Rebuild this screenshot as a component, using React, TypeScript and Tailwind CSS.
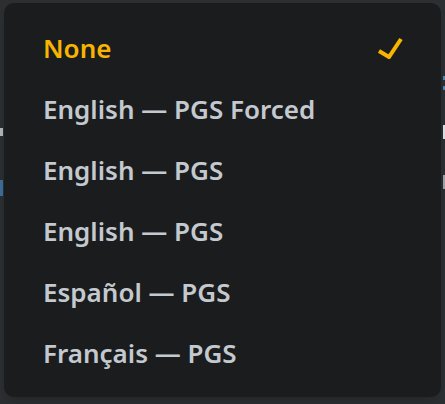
const options = [
  { id: "none", label: "None" },
  { id: "en-forced", label: "English — PGS Forced" },
  { id: "en-1", label: "English — PGS" },
  { id: "en-2", label: "English — PGS" },
  { id: "es", label: "Español — PGS" },
  { id: "fr", label: "Français — PGS" },
];

function Check() {
  return (
    <svg width="26" height="22" viewBox="0 0 26 22" fill="none">
      <path
        d="M2 14 L12 20 L24 2"
        stroke="#f7b500"
        strokeWidth="4"
        strokeLinecap="butt"
        strokeLinejoin="miter"
      />
    </svg>
  );
}

export default function App() {
  const selected = "none";

  return (
    <div
      className="flex w-[445px] h-[404px] bg-[#2b2f31] overflow-hidden"
      style={{ fontFamily: '"Noto Sans", "Open Sans", sans-serif' }}
    >
      {/* page behind the menu, left edge */}
      <div className="flex w-[4px] flex-col">
        <span className="mt-[128px] h-[8px] w-[3px] bg-[#aeb4b8]" />
        <span className="mt-[44px] h-[16px] w-[3px] bg-[#3d6d96]" />
      </div>

      <div className="mt-[3px] h-[394px] w-[437px] rounded-[10px] bg-[#1b1c1e] py-[14px] shadow-lg">
        <ul>
          {options.map((opt) => {
            const active = opt.id === selected;
            return (
              <li
                key={opt.id}
                className="flex h-[61px] items-center justify-between pl-[39px] pr-[38px]"
              >
                <span
                  className={
                    "text-[26px] font-semibold leading-none " +
                    (active ? "text-[#f7b500]" : "text-[#c3c9ce]")
                  }
                >
                  {opt.label}
                </span>
                {active && <Check />}
              </li>
            );
          })}
        </ul>
      </div>

      {/* page behind the menu, right edge */}
      <div className="flex w-[4px] flex-col items-end">
        <span className="mt-[76px] h-[4px] w-[2px] bg-[#4f86b0]" />
        <span className="mt-[6px] h-[4px] w-[2px] bg-[#4f86b0]" />
        <span className="mt-[35px] h-[14px] w-[2px] bg-[#d8dde0]" />
        <span className="mt-[36px] h-[14px] w-[2px] bg-[#9aa0a4]" />
      </div>
    </div>
  );
}
